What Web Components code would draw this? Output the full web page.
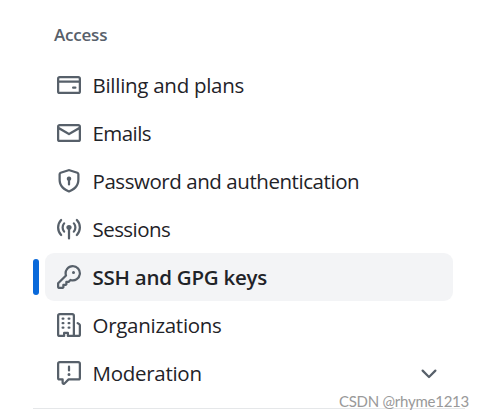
<!DOCTYPE html>
<html lang="en">
<head>
<meta charset="utf-8">
<title>Access</title>
<style>
  :root {
    --color-text: #1f2328;
    --color-muted: #57606a;
    --color-accent: #0969da;
    --color-active: #f3f4f6;
    --color-border: #e5e7e9;
  }

  body {
    margin: 0;
    height: 418px;
    overflow: hidden;
    background: #fff;
    color: var(--color-text);
    font-family: "Open Sans", "Noto Sans", sans-serif;
  }
</style>
</head>
<body>
<settings-nav heading="Access">
  <nav-item icon="card">Billing and plans</nav-item>
  <nav-item icon="mail" style="letter-spacing: -0.55px">Emails</nav-item>
  <nav-item icon="shield" style="letter-spacing: -0.44px">Password and authentication</nav-item>
  <nav-item icon="broadcast" style="letter-spacing: -0.55px">Sessions</nav-item>
  <nav-item icon="key" style="letter-spacing: -0.25px" active>SSH and GPG keys</nav-item>
  <nav-item icon="organization">Organizations</nav-item>
  <nav-item icon="report" expandable>Moderation</nav-item>
</settings-nav>
<page-mark>CSDN @rhyme1213</page-mark>

<script>
const ICONS = {
  card: 'M10.75 9a.75.75 0 0 0 0 1.5h1.5a.75.75 0 0 0 0-1.5h-1.5ZM0 3.75C0 2.784.784 2 1.75 2h12.5c.966 0 1.75.784 1.75 1.75v8.5A1.75 1.75 0 0 1 14.25 14H1.75A1.75 1.75 0 0 1 0 12.25ZM14.5 6.5h-13v5.75c0 .138.112.25.25.25h12.5a.25.25 0 0 0 .25-.25Zm0-2.75a.25.25 0 0 0-.25-.25H1.75a.25.25 0 0 0-.25.25V5h13Z',
  mail: 'M1.75 2h12.5c.966 0 1.75.784 1.75 1.75v8.5A1.75 1.75 0 0 1 14.25 14H1.75A1.75 1.75 0 0 1 0 12.25v-8.5C0 2.784.784 2 1.75 2ZM1.5 12.251c0 .138.112.25.25.25h12.5a.25.25 0 0 0 .25-.25V5.809L8.38 9.397a.75.75 0 0 1-.76 0L1.5 5.809v6.442Zm13-8.181v-.32a.25.25 0 0 0-.25-.25H1.75a.25.25 0 0 0-.25.25v.32L8 7.88Z',
  shield: 'm8.533.133 5.25 1.68A1.75 1.75 0 0 1 15 3.48V7c0 1.566-.32 3.182-1.303 4.682-.983 1.498-2.585 2.813-5.032 3.855a1.697 1.697 0 0 1-1.33 0c-2.447-1.042-4.049-2.357-5.032-3.855C1.32 10.182 1 8.566 1 7V3.48a1.755 1.755 0 0 1 1.217-1.667l5.25-1.68a1.748 1.748 0 0 1 1.066 0Zm-.61 1.429.001.001-5.25 1.68a.251.251 0 0 0-.174.237V7c0 1.36.275 2.666 1.057 3.859.784 1.194 2.121 2.342 4.366 3.298a.196.196 0 0 0 .154 0c2.245-.957 3.582-2.103 4.366-3.297C13.225 9.666 13.5 8.358 13.5 7V3.48a.25.25 0 0 0-.174-.238l-5.25-1.68a.25.25 0 0 0-.153 0ZM9.5 6.5c0 .536-.286 1.032-.75 1.3v2.45a.75.75 0 0 1-1.5 0V7.8A1.5 1.5 0 1 1 9.5 6.5Z',
  broadcast: 'M8.75 8.582v5.668a.75.75 0 0 1-1.5 0V8.582a1.75 1.75 0 1 1 1.5 0Zm3.983-7.125a.75.75 0 0 1 1.06.026A7.976 7.976 0 0 1 16 7c0 2.139-.84 4.083-2.207 5.517a.75.75 0 1 1-1.086-1.034A6.474 6.474 0 0 0 14.5 7a6.474 6.474 0 0 0-1.793-4.483.75.75 0 0 1 .026-1.06Zm-9.466 0c.3.286.312.76.026 1.06A6.474 6.474 0 0 0 1.5 7a6.47 6.47 0 0 0 1.793 4.483.75.75 0 0 1-1.086 1.034A7.973 7.973 0 0 1 0 7c0-2.139.84-4.083 2.207-5.517a.75.75 0 0 1 1.06-.026Zm8.556 2.321A4.988 4.988 0 0 1 13 7a4.988 4.988 0 0 1-1.177 3.222.75.75 0 1 1-1.146-.967A3.487 3.487 0 0 0 11.5 7c0-.86-.309-1.645-.823-2.255a.75.75 0 0 1 1.146-.967Zm-6.492.958A3.48 3.48 0 0 0 4.5 7a3.48 3.48 0 0 0 .823 2.255.75.75 0 0 1-1.146.967A4.981 4.981 0 0 1 3 7a4.982 4.982 0 0 1 1.188-3.236.75.75 0 1 1 1.143.972Z',
  key: 'M10.5 0a5.499 5.499 0 1 1-1.288 10.848l-.932.932a.749.749 0 0 1-.53.22H7v.75a.749.749 0 0 1-.22.53l-.5.5a.749.749 0 0 1-.53.22H5v.75a.749.749 0 0 1-.22.53l-.5.5a.749.749 0 0 1-.53.22h-2A1.75 1.75 0 0 1 0 14.25v-2c0-.199.079-.389.22-.53l4.932-4.932A5.5 5.5 0 0 1 10.5 0Zm-4 5.5c-.001.431.069.86.205 1.269a.75.75 0 0 1-.181.768L1.5 12.56v1.69c0 .138.112.25.25.25h1.69l.06-.06v-1.19a.75.75 0 0 1 .75-.75h1.19l.06-.06v-1.19a.75.75 0 0 1 .75-.75h1.19l1.023-1.025a.75.75 0 0 1 .768-.18A4 4 0 1 0 6.5 5.5ZM11 6a1 1 0 1 1 0-2 1 1 0 0 1 0 2Z',
  organization: 'M1.75 16A1.75 1.75 0 0 1 0 14.25V1.75C0 .784.784 0 1.75 0h8.5C11.216 0 12 .784 12 1.75v12.5c0 .085-.006.168-.018.25h2.268a.25.25 0 0 0 .25-.25V8.285a.25.25 0 0 0-.111-.208l-1.055-.703a.749.749 0 1 1 .832-1.248l1.055.703c.487.325.779.871.779 1.456v5.965A1.75 1.75 0 0 1 14.25 16h-3.5a.766.766 0 0 1-.197-.026c-.099.017-.2.026-.303.026h-3a.75.75 0 0 1-.75-.75V14h-1v1.25a.75.75 0 0 1-.75.75Zm-.25-1.75c0 .138.112.25.25.25H4v-1.25a.75.75 0 0 1 .75-.75h2.5a.75.75 0 0 1 .75.75v1.25h2.25a.25.25 0 0 0 .25-.25V1.75a.25.25 0 0 0-.25-.25h-8.5a.25.25 0 0 0-.25.25ZM3.75 6h.5a.75.75 0 0 1 0 1.5h-.5a.75.75 0 0 1 0-1.5ZM3 3.75A.75.75 0 0 1 3.75 3h.5a.75.75 0 0 1 0 1.5h-.5A.75.75 0 0 1 3 3.75Zm4 3A.75.75 0 0 1 7.75 6h.5a.75.75 0 0 1 0 1.5h-.5A.75.75 0 0 1 7 6.75ZM7.75 3h.5a.75.75 0 0 1 0 1.5h-.5a.75.75 0 0 1 0-1.5ZM3 9.75A.75.75 0 0 1 3.75 9h.5a.75.75 0 0 1 0 1.5h-.5A.75.75 0 0 1 3 9.75ZM7.75 9h.5a.75.75 0 0 1 0 1.5h-.5a.75.75 0 0 1 0-1.5Z',
  report: 'M0 1.75C0 .784.784 0 1.75 0h12.5C15.216 0 16 .784 16 1.75v9.5A1.75 1.75 0 0 1 14.25 13H8.06l-2.573 2.573A1.458 1.458 0 0 1 3 14.543V13H1.75A1.75 1.75 0 0 1 0 11.25Zm1.75-.25a.25.25 0 0 0-.25.25v9.5c0 .138.112.25.25.25h2a.75.75 0 0 1 .75.75v2.19l2.72-2.72a.749.749 0 0 1 .53-.22h6.5a.25.25 0 0 0 .25-.25v-9.5a.25.25 0 0 0-.25-.25Zm7 2.25v2.5a.75.75 0 0 1-1.5 0v-2.5a.75.75 0 0 1 1.5 0ZM9 9a1 1 0 1 1-2 0 1 1 0 0 1 2 0Z',
  chevron: 'M12.78 5.22a.749.749 0 0 1 0 1.06l-4.25 4.25a.749.749 0 0 1-1.06 0L3.22 6.28a.749.749 0 1 1 1.06-1.06L8 8.939l3.72-3.719a.749.749 0 0 1 1.06 0Z'
};

/**
 * <nav-icon name="..."> - 24px line icon
 */
class NavIcon extends HTMLElement {
  connectedCallback() {
    if (this.shadowRoot) return;
    this.attachShadow({ mode: 'open' }).innerHTML = `
      <style>
        :host {
          display: block;
          flex: none;
          width: 24px;
          height: 24px;
          color: var(--color-muted);
        }

        svg {
          display: block;
          fill: currentColor;
        }
      </style>
      <svg width="24" height="24" viewBox="0 0 16 16" aria-hidden="true">
        <path d="${ICONS[this.getAttribute('name')]}"/>
      </svg>
    `;
  }
}

/**
 * <nav-item icon="..." active expandable> - one row of the menu
 */
class NavItem extends HTMLElement {
  connectedCallback() {
    if (this.shadowRoot) return;
    this.attachShadow({ mode: 'open' }).innerHTML = `
      <style>
        :host {
          display: grid;
          grid-template-columns: 6px 408px;
          column-gap: 6px;
          align-items: center;
          height: 48px;
          font-size: 20.5px;
          letter-spacing: -0.28px;
        }

        .bar {
          height: 36px;
          border-radius: 3px;
        }

        .row {
          display: flex;
          align-items: center;
          gap: 11.5px;
          box-sizing: border-box;
          height: 48px;
          padding: 0 12px;
          border-radius: 9px;
        }

        .label {
          flex: 1;
          line-height: 30px;
          white-space: nowrap;
        }

        .toggle {
          margin-top: 2px;
        }

        :host([active]) {
          font-weight: 600;
        }

        :host([active]) .bar {
          background: var(--color-accent);
        }

        :host([active]) .row {
          background: var(--color-active);
        }
      </style>
      <span class="bar"></span>
      <div class="row">
        <nav-icon name="${this.getAttribute('icon')}"></nav-icon>
        <span class="label"><slot></slot></span>
        ${this.hasAttribute('expandable') ? '<nav-icon class="toggle" name="chevron"></nav-icon>' : ''}
      </div>
    `;
  }
}

/**
 * <settings-nav heading="..."> - titled group of items, closed by a rule
 */
class SettingsNav extends HTMLElement {
  connectedCallback() {
    if (this.shadowRoot) return;
    this.attachShadow({ mode: 'open' }).innerHTML = `
      <style>
        :host {
          display: block;
          box-sizing: border-box;
          width: 432px;
          height: 409px;
          margin-left: 33px;
          padding-top: 21px;
          border-bottom: 1px solid var(--color-border);
        }

        h2 {
          margin: 0 0 13px 21px;
          color: var(--color-muted);
          font-size: 17px;
          font-weight: 600;
          line-height: 27px;
          letter-spacing: -0.2px;
        }
      </style>
      <h2>${this.getAttribute('heading')}</h2>
      <nav><slot></slot></nav>
    `;
  }
}

/**
 * <page-mark> - small credit laid over the bottom right corner
 */
class PageMark extends HTMLElement {
  connectedCallback() {
    if (this.shadowRoot) return;
    this.attachShadow({ mode: 'open' }).innerHTML = `
      <style>
        :host {
          position: absolute;
          right: 15px;
          bottom: 7px;
          color: #999;
          font: 15px/20px Lato, "Liberation Sans", sans-serif;
          letter-spacing: -0.25px;
          white-space: nowrap;
        }
      </style>
      <slot></slot>
    `;
  }
}

customElements.define('nav-icon', NavIcon);
customElements.define('nav-item', NavItem);
customElements.define('settings-nav', SettingsNav);
customElements.define('page-mark', PageMark);
</script>
</body>
</html>
